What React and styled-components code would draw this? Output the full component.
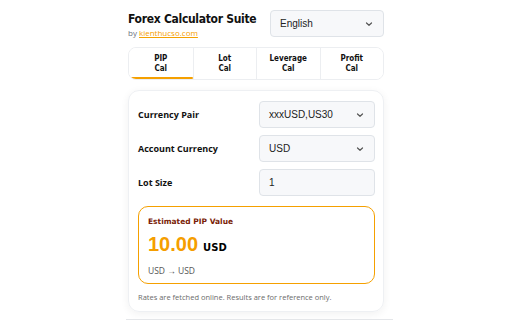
import React, { useState } from 'react';
import styled, { createGlobalStyle } from 'styled-components';

const GlobalStyle = createGlobalStyle`
  html, body {
    margin: 0;
    padding: 0;
    background: #ffffff;
  }
  body {
    font-family: "Open Sans", "Liberation Sans", sans-serif;
    color: #111;
  }
`;

const Page = styled.div`
  width: 256px;
  margin: 0 auto;
  padding-top: 10px;
  display: flex;
  flex-direction: column;
`;

const Header = styled.div`
  display: flex;
  justify-content: space-between;
  align-items: flex-start;
`;

const Brand = styled.div`
  display: flex;
  flex-direction: column;
  padding-top: 1px;
  white-space: nowrap;
`;

const Title = styled.h1`
  margin: 0;
  font-family: "DejaVu Sans Condensed", "DejaVu Sans", Verdana, sans-serif;
  font-size: 12px;
  font-weight: 700;
  letter-spacing: -0.3px;
  line-height: 16px;
  color: #111;
`;

const ByLine = styled.div`
  font-size: 8px;
  line-height: 12px;
  color: #6b7280;

  a {
    color: #f5a000;
    text-decoration: underline;
  }
`;

const SelectBox = styled.div`
  width: ${(p) => p.$width || '116px'};
  height: 27px;
  box-sizing: border-box;
  display: flex;
  align-items: center;
  justify-content: space-between;
  padding: 0 9px 0 9px;
  background: #f7f8fa;
  border: 1px solid #dfe3e8;
  border-radius: 4px;
  font-family: "Liberation Sans", Arial, sans-serif;
  font-size: 10px;
  color: #222;
`;

const Chevron = () => (
  <svg width="10" height="10" viewBox="0 0 10 10">
    <path d="M2.5 4 L5 6.3 L7.5 4" fill="none" stroke="#555" strokeWidth="1.2" strokeLinecap="round" strokeLinejoin="round" />
  </svg>
);

const Tabs = styled.div`
  margin-top: 8px;
  height: 33px;
  box-sizing: border-box;
  display: grid;
  grid-template-columns: repeat(4, 1fr);
  border: 1px solid #eceef1;
  border-radius: 8px;
  overflow: hidden;
`;

const Tab = styled.button`
  position: relative;
  border: none;
  border-left: ${(p) => (p.$first ? 'none' : '1px solid #eceef1')};
  background: #fff;
  font-family: "DejaVu Sans Condensed", "DejaVu Sans", Verdana, sans-serif;
  font-size: 8px;
  font-weight: 700;
  line-height: 10px;
  color: #111;
  padding: 0;
  cursor: pointer;

  &::after {
    content: '';
    display: ${(p) => (p.$active ? 'block' : 'none')};
    position: absolute;
    left: 0;
    right: 0;
    bottom: 0;
    height: 2px;
    background: #f5a000;
    border-radius: 2px;
  }
`;

const Card = styled.div`
  margin-top: 10px;
  box-sizing: border-box;
  border: 1px solid #eef0f3;
  border-radius: 11px;
  box-shadow: 0 2px 8px rgba(0, 0, 0, 0.06);
  padding: 10px 8px 9px 9px;
  display: flex;
  flex-direction: column;
`;

const Row = styled.div`
  display: flex;
  justify-content: space-between;
  align-items: center;
  margin-bottom: 7px;
`;

const Label = styled.span`
  font-size: 9px;
  font-weight: 700;
  color: #111;
`;

const Result = styled.div`
  margin-top: 3px;
  border: 1.5px solid #f5a000;
  border-radius: 10px;
  padding: 9px 9px 7px 9px;
  display: flex;
  flex-direction: column;
`;

const ResultTitle = styled.div`
  font-family: "DejaVu Sans", Verdana, sans-serif;
  font-size: 7.5px;
  font-weight: 700;
  color: #7a1d06;
  line-height: 12px;
`;

const Amount = styled.div`
  display: flex;
  align-items: baseline;
  gap: 5px;
  margin-top: 4px;
  line-height: 24px;
`;

const Big = styled.span`
  font-family: "Liberation Sans", Arial, sans-serif;
  font-size: 20px;
  font-weight: 700;
  color: #f59e00;
`;

const Unit = styled.span`
  font-family: "DejaVu Sans", Verdana, sans-serif;
  font-size: 10px;
  font-weight: 700;
  color: #000;
`;

const Conversion = styled.div`
  font-size: 8.5px;
  color: #555;
  margin-top: 5px;
`;

const Note = styled.div`
  margin-top: 8px;
  font-size: 7.5px;
  color: #6b6b6b;
`;

const BottomRule = styled.div`
  margin: 7px 0 0 -2px;
  width: 267px;
  height: 1px;
  background: #e4e6e9;
`;

export default function App() {
  const [active, setActive] = useState(0);
  const tabs = [
    ['PIP', 'Cal'],
    ['Lot', 'Cal'],
    ['Leverage', 'Cal'],
    ['Profit', 'Cal'],
  ];

  return (
    <>
      <GlobalStyle />
      <Page>
        <Header>
          <Brand>
            <Title>Forex Calculator Suite</Title>
            <ByLine>
              by <a href="#">kienthucso.com</a>
            </ByLine>
          </Brand>
          <SelectBox $width="114px">
            <span>English</span>
            <Chevron />
          </SelectBox>
        </Header>

        <Tabs>
          {tabs.map((t, i) => (
            <Tab key={i} $first={i === 0} $active={active === i} onClick={() => setActive(i)}>
              {t[0]}
              <br />
              {t[1]}
            </Tab>
          ))}
        </Tabs>

        <Card>
          <Row>
            <Label>Currency Pair</Label>
            <SelectBox>
              <span>xxxUSD,US30</span>
              <Chevron />
            </SelectBox>
          </Row>
          <Row>
            <Label>Account Currency</Label>
            <SelectBox>
              <span>USD</span>
              <Chevron />
            </SelectBox>
          </Row>
          <Row>
            <Label>Lot Size</Label>
            <SelectBox>
              <span>1</span>
            </SelectBox>
          </Row>

          <Result>
            <ResultTitle>Estimated PIP Value</ResultTitle>
            <Amount>
              <Big>10.00</Big>
              <Unit>USD</Unit>
            </Amount>
            <Conversion>USD → USD</Conversion>
          </Result>

          <Note>Rates are fetched online. Results are for reference only.</Note>
        </Card>
        <BottomRule />
      </Page>
    </>
  );
}
